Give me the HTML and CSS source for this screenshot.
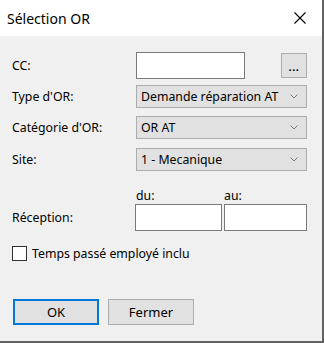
FILE: index.html
```html
<!DOCTYPE html>
<html lang="fr">
<head>
<meta charset="utf-8">
<title>Sélection OR</title>
<link rel="stylesheet" href="styles.css">
</head>
<body>
<div class="window">
  <div class="titlebar">
    <span class="title">Sélection OR</span>
    <svg class="close" width="12" height="12" viewBox="0 0 12 12"><path d="M0.5 0.5 L11.5 11.5 M11.5 0.5 L0.5 11.5" stroke="#000" stroke-width="1.1" fill="none"/></svg>
  </div>
  <div class="content">
    <div class="row row-cc">
      <span class="label">CC:</span>
      <div class="input input-cc"></div>
      <div class="btn-dots">...</div>
    </div>
    <div class="row row-sel r1">
      <span class="label">Type d'OR:</span>
      <div class="select"><span>Demande réparation AT</span><svg class="chev" width="8" height="5" viewBox="0 0 8 5"><path d="M0.5 0.5 L4 4 L7.5 0.5" stroke="#7a7a7a" fill="none"/></svg></div>
    </div>
    <div class="row row-sel r2">
      <span class="label">Catégorie d'OR:</span>
      <div class="select"><span>OR AT</span><svg class="chev" width="8" height="5" viewBox="0 0 8 5"><path d="M0.5 0.5 L4 4 L7.5 0.5" stroke="#7a7a7a" fill="none"/></svg></div>
    </div>
    <div class="row row-sel r3">
      <span class="label">Site:</span>
      <div class="select"><span>1 - Mecanique</span><svg class="chev" width="8" height="5" viewBox="0 0 8 5"><path d="M0.5 0.5 L4 4 L7.5 0.5" stroke="#7a7a7a" fill="none"/></svg></div>
    </div>
    <div class="row row-dates-head">
      <span class="label"></span>
      <span class="du">du:</span>
      <span class="au">au:</span>
    </div>
    <div class="row row-dates">
      <span class="label">Réception:</span>
      <div class="input input-du"></div>
      <div class="input input-au"></div>
    </div>
    <div class="row row-check">
      <span class="checkbox"></span>
      <span class="check-label">Temps passé employé inclu</span>
    </div>
    <div class="row row-buttons">
      <div class="btn btn-ok">OK</div>
      <div class="btn btn-close">Fermer</div>
    </div>
  </div>
</div>
</body>
</html>
```

FILE: styles.css
```css
* { box-sizing: border-box; }
html, body { margin: 0; padding: 0; }
body {
  font-family: "Noto Sans", "Open Sans", sans-serif;
  font-size: 12.3px;
  color: #000;
  background: #f0f0f0;
}
.window {
  width: 324px;
  height: 343px;
  background: #f0f0f0;
  border-right: 2px solid #626262;
  border-bottom: 2px solid #626262;
}
.titlebar {
  height: 36px;
  background: #fff;
  display: flex;
  align-items: center;
  padding-left: 7px;
  padding-right: 16px;
  justify-content: space-between;
}
.title {
  font-size: 14px;
}
.close { display: block; }
.content {
  padding: 16px 0 0 12px;
}
.row {
  display: flex;
  align-items: center;
}
.label {
  width: 124px;
  flex: none;
}
.input {
  background: #fff;
  border: 1px solid #7a7a7a;
  height: 27px;
}
.row-cc { height: 27px; }
.input-cc { width: 109px; }
.btn-dots {
  margin-left: 36px;
  width: 26px;
  height: 25px;
  background: #e1e1e1;
  border: 1px solid #adadad;
  text-align: center;
  font-weight: bold;
  font-size: 11px;
  line-height: 26px;
  letter-spacing: 0.5px;
}
.row-sel { height: 23px; }
.r1 { margin-top: 6px; }
.r2 { margin-top: 8px; }
.r3 { margin-top: 9px; }
.select {
  width: 171px;
  height: 23px;
  background: #e1e1e1;
  border: 1px solid #adadad;
  display: flex;
  align-items: center;
  justify-content: space-between;
  padding: 0 8px 0 4px;
}
.chev { display: block; }
.row-dates-head {
  margin-top: 16px;
  height: 16px;
}
.du { width: 88px; }
.row-dates {
  margin-top: 1px;
  height: 27px;
}
.input-du { width: 87px; margin-left: -1px; }
.input-au { width: 83px; margin-left: 2px; }
.row-check {
  margin-top: 15px;
  height: 15px;
}
.checkbox {
  width: 15px;
  height: 15px;
  border: 1px solid #333;
  background: #fff;
  margin-right: 5px;
}
.row-buttons {
  margin-top: 38px;
  height: 26px;
  padding-left: 1px;
}
.btn {
  width: 86px;
  height: 26px;
  background: #e1e1e1;
  display: flex;
  align-items: center;
  justify-content: center;
  font-size: 13px;
}
.btn-ok { border: 2px solid #0078d7; }
.btn-close { border: 1px solid #adadad; margin-left: 9px; }
```
